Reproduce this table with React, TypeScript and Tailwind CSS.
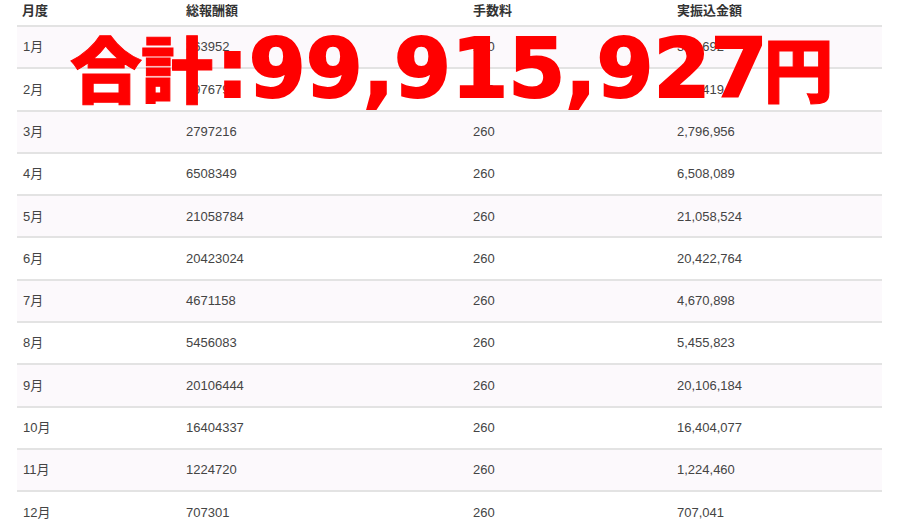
const rows = [
  { month: "1月", gross: "363952", fee: "260", net: "363,692" },
  { month: "2月", gross: "197679", fee: "260", net: "197,419" },
  { month: "3月", gross: "2797216", fee: "260", net: "2,796,956" },
  { month: "4月", gross: "6508349", fee: "260", net: "6,508,089" },
  { month: "5月", gross: "21058784", fee: "260", net: "21,058,524" },
  { month: "6月", gross: "20423024", fee: "260", net: "20,422,764" },
  { month: "7月", gross: "4671158", fee: "260", net: "4,670,898" },
  { month: "8月", gross: "5456083", fee: "260", net: "5,455,823" },
  { month: "9月", gross: "20106444", fee: "260", net: "20,106,184" },
  { month: "10月", gross: "16404337", fee: "260", net: "16,404,077" },
  { month: "11月", gross: "1224720", fee: "260", net: "1,224,460" },
  { month: "12月", gross: "707301", fee: "260", net: "707,041" },
];

const cols = "grid grid-cols-[163px_287px_204px_1fr]";

const App = () => {
  return (
    <div
      className="relative w-[900px] h-[520px] overflow-hidden bg-white"
      style={{ fontFamily: '"Liberation Sans", "Noto Sans CJK JP", sans-serif' }}
    >
      {/* Table */}
      <div className="ml-[17px] w-[865px] text-[13px] text-[#444]">
        <div className={`${cols} h-[25px] items-start pt-[1px] font-bold text-[#333]`}>
          <div className="pl-[5px]">月度</div>
          <div className="pl-[6px]">総報酬額</div>
          <div className="pl-[6px]">手数料</div>
          <div className="pl-[6px]">実振込金額</div>
        </div>

        {rows.map((r, i) => (
          <div
            key={r.month}
            className={`${cols} h-[42.3px] items-center border-t-2 border-[#e3e3e3] ${
              i % 2 === 0 ? "bg-[#fcf9fc]" : "bg-white"
            }`}
          >
            <div className="pl-[6px]">{r.month}</div>
            <div className="pl-[6px]">{r.gross}</div>
            <div className="pl-[6px]">{r.fee}</div>
            <div className="pl-[6px]">{r.net}</div>
          </div>
        ))}
      </div>

      {/* Total overlay */}
      <div className="absolute left-[70px] top-[28px] flex items-baseline text-[#ff0000] leading-none">
        <span
          className="text-[72px] font-black tracking-[-1px] [-webkit-text-stroke:1px_#ff0000]"
          style={{ fontFamily: '"Noto Sans CJK JP", sans-serif' }}
        >
          合計
        </span>
        <span
          className="text-[82px] font-bold ml-[4px] [-webkit-text-stroke:2px_#ff0000]"
          style={{ fontFamily: '"DejaVu Sans", sans-serif' }}
        >
          :99,915,927
        </span>
        <span
          className="text-[70px] font-black ml-[-4px] [-webkit-text-stroke:1px_#ff0000]"
          style={{ fontFamily: '"Noto Sans CJK JP", sans-serif' }}
        >
          円
        </span>
      </div>
    </div>
  );
};

export default App;
